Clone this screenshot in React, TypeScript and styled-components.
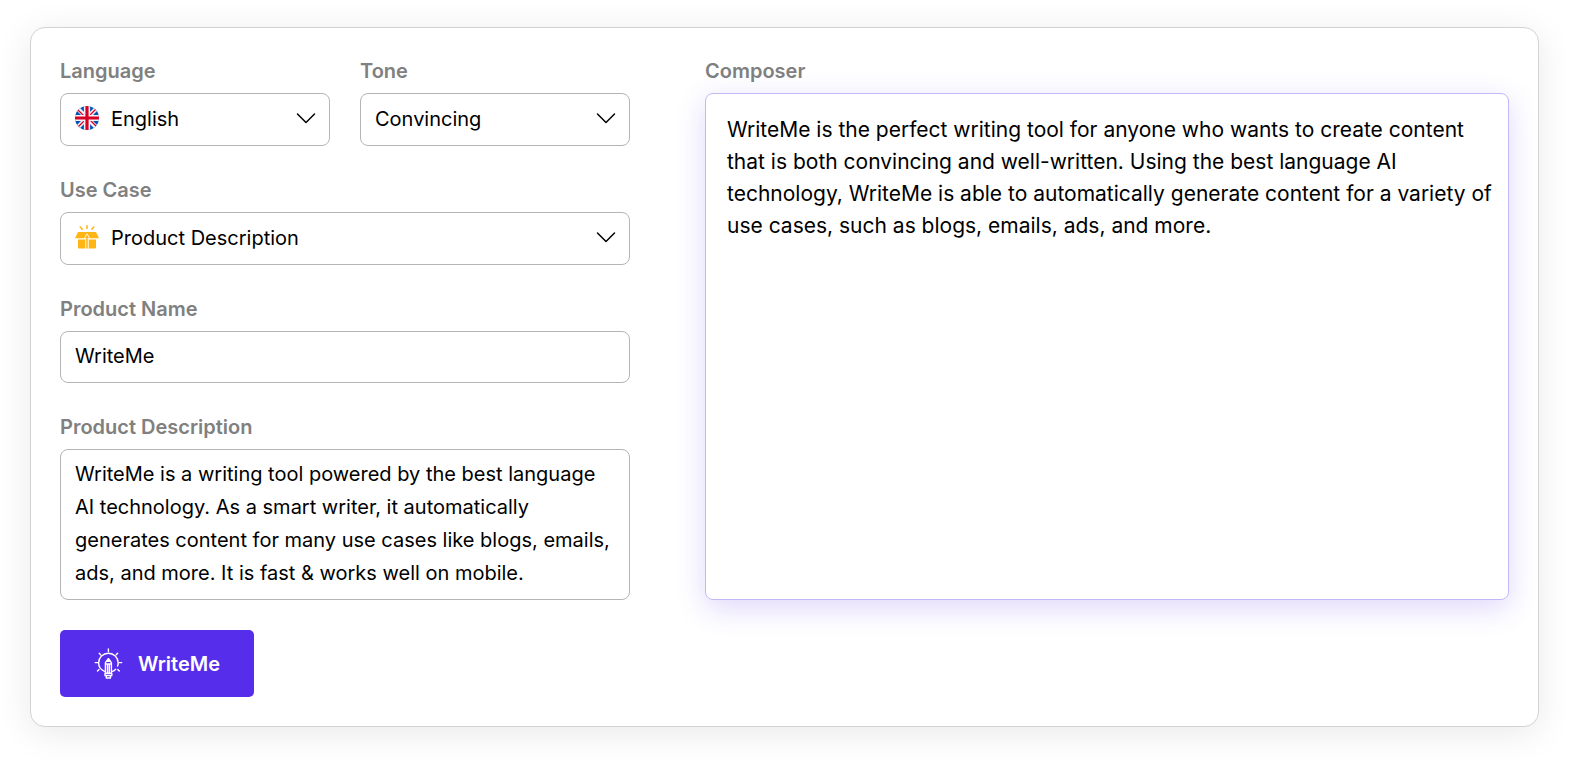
import React, { useState } from "react";
import styled, { createGlobalStyle } from "styled-components";

const GlobalStyle = createGlobalStyle`
  *, *::before, *::after { box-sizing: border-box; }
  body {
    margin: 0;
    background: #fff;
    color: #000;
    font-family: Inter, "Liberation Sans", sans-serif;
    font-size: 20px;
  }
`;

const Page = styled.main`
  padding: 27px 30px 34px;
`;

const Card = styled.form`
  display: grid;
  grid-template-columns: minmax(0, 570fr) minmax(0, 804fr);
  column-gap: 75px;
  row-gap: 30px;
  padding: 29px;
  border: 1px solid #d3d3d3;
  border-radius: 15px;
  background: #fff;
  box-shadow: 0 6px 36px rgba(0, 0, 0, 0.09);
`;

const Fields = styled.div`
  display: flex;
  flex-direction: column;
  gap: 30px;
`;

const Pair = styled.div`
  display: grid;
  grid-template-columns: 1fr 1fr;
  gap: 30px;
`;

const Field = styled.div`
  display: flex;
  flex-direction: column;
  gap: 8px;
  min-width: 0;
`;

const Label = styled.label`
  color: #808080;
  font-weight: 600;
  line-height: 28px;
`;

const Control = styled.div`
  position: relative;
  display: flex;
`;

const LeadingIcon = styled.span`
  position: absolute;
  left: 15px;
  top: 0;
  bottom: 3px;
  display: flex;
  align-items: center;
  pointer-events: none;
`;

const TrailingIcon = styled(LeadingIcon)`
  left: auto;
  right: 14px;
`;

const Select = styled.select<{ $icon?: boolean }>`
  appearance: none;
  width: 100%;
  height: 53px;
  padding: 0 44px 2px ${(p) => (p.$icon ? 50 : 14)}px;
  border: 1px solid #b5b5b5;
  border-radius: 8px;
  background: #fff;
  color: #000;
  font: inherit;
`;

const TextInput = styled.input`
  width: 100%;
  height: 52px;
  padding: 0 14px 2px;
  border: 1px solid #b5b5b5;
  border-radius: 8px;
  background: #fff;
  color: #000;
  font: inherit;
`;

const TextArea = styled.textarea`
  display: block;
  width: 100%;
  height: 151px;
  padding: 8px 14px;
  border: 1px solid #b5b5b5;
  border-radius: 8px;
  background: #fff;
  color: #000;
  font: inherit;
  line-height: 33px;
  resize: none;
  overflow: hidden;
`;

const Composer = styled(TextArea)`
  flex: 1;
  height: auto;
  padding: 20px 14px 20px 21px;
  border-color: #c3b8fa;
  font-size: 21px;
  line-height: 32px;
  box-shadow: 0 8px 30px rgba(86, 45, 235, 0.19);
`;

const SubmitButton = styled.button`
  display: inline-flex;
  align-items: center;
  justify-self: start;
  gap: 15px;
  height: 67px;
  padding: 0 34px;
  border: 0;
  border-radius: 5px;
  background: #562deb;
  color: #fff;
  font: inherit;
  font-weight: 600;
  cursor: pointer;
`;

const Chevron = () => (
  <svg width="20" height="12" viewBox="0 0 20 12" fill="none" stroke="#000" strokeWidth="1.5" strokeLinecap="round" strokeLinejoin="round" aria-hidden="true">
    <path d="M1.5 2 10 10.500l8.500-8.500" />
  </svg>
);

const UnionJack = () => (
  <svg width="24" height="24" viewBox="0 0 24 24" aria-hidden="true">
    <defs>
      <clipPath id="roundel"><circle cx="12" cy="12" r="12" /></clipPath>
    </defs>
    <g clipPath="url(#roundel)">
      <rect width="24" height="24" fill="#0052b4" />
      <path d="M0 0 24 24M24 0 0 24" stroke="#f5f3f6" strokeWidth="4.400" />
      <path d="M2.500 3.500 11 12M13 12l8.500 8.500M21.500 2.500 12 12M11 13l-8.500 8.500" stroke="#d80027" strokeWidth="1.300" />
      <path d="M12 0v24M0 12h24" stroke="#f5f3f6" strokeWidth="6.200" />
      <path d="M12 0v24M0 12h24" stroke="#d80027" strokeWidth="3.200" />
    </g>
  </svg>
);

const GiftBox = () => (
  <svg width="24" height="24" viewBox="0 0 24 24" fill="#ffb615" aria-hidden="true">
    <path d="M3 7h18l3 6.200h-9.200L12.600 8.800h-1.200L9.200 13.200H0z" />
    <path d="M12 9.200l2 4h-4z" />
    <path d="M3 14.400h7.300v9H4a1 1 0 0 1-1-1zM13.700 14.400H21v8a1 1 0 0 1-1 1h-6.300zM11.200 13.200h1.600v10.200h-1.600z" />
    <path d="M12 .9v2.600M5.200 2l2 2.200M18.800 2l-2 2.200" stroke="#ffb615" strokeWidth="1.600" strokeLinecap="round" />
  </svg>
);

const BulbPencil = () => (
  <svg width="29" height="32" viewBox="0 0 29 32" fill="none" stroke="#fff" strokeWidth="1.400" strokeLinecap="round" strokeLinejoin="round" aria-hidden="true">
    <path d="M10.500 23.300C7 21.800 4.600 18.800 4.600 15a9.800 9.800 0 0 1 19.600 0c0 1-.2 2-.6 3M21.700 21.200c-.9.900-2 1.700-3.200 2.100" />
    <path d="M14.400 1v2.500M5.200 5.300l1.400 1.500M23.600 5.300l-1.400 1.500M1.200 14.600h2.400M25.300 14.600h2.400M3.500 23l1.500-1.500M25.300 23l-1.500-1.500" />
    <path d="M11.400 25V14.700l3-4 3 4V25M11.400 16h6M13.500 16v9M15.300 16v9M11 25.200h6.800v2.300H11zM12.300 27.700v2.300h4.200v-2.300" />
    <path d="m12.700 13.400 1.700-2.500 1.700 2.500z" fill="#fff" />
  </svg>
);

interface SelectFieldProps {
  id: string;
  label: string;
  options: string[];
  icon?: React.ReactNode;
}

const SelectField = ({ id, label, options, icon }: SelectFieldProps) => (
  <Field>
    <Label htmlFor={id}>{label}</Label>
    <Control>
      <Select id={id} $icon={Boolean(icon)}>
        {options.map((option) => (
          <option key={option}>{option}</option>
        ))}
      </Select>
      {icon && <LeadingIcon>{icon}</LeadingIcon>}
      <TrailingIcon><Chevron /></TrailingIcon>
    </Control>
  </Field>
);

const DESCRIPTION =
  "WriteMe is a writing tool powered by the best language AI technology. As a smart writer, it automatically generates content for many use cases like blogs, emails, ads, and more. It is fast & works well on mobile.";

const RESULT =
  "WriteMe is the perfect writing tool for anyone who wants to create content that is both convincing and well-written. Using the best language AI technology, WriteMe is able to automatically generate content for a variety of use cases, such as blogs, emails, ads, and more.";

export default function App() {
  const [name, setName] = useState("WriteMe");
  const [description, setDescription] = useState(DESCRIPTION);
  const [result, setResult] = useState(RESULT);

  return (
    <>
      <GlobalStyle />
      <Page>
        <Card onSubmit={(e) => e.preventDefault()}>
          <Fields>
            <Pair>
              <SelectField id="language" label="Language" options={["English"]} icon={<UnionJack />} />
              <SelectField id="tone" label="Tone" options={["Convincing"]} />
            </Pair>
            <SelectField id="use-case" label="Use Case" options={["Product Description"]} icon={<GiftBox />} />
            <Field>
              <Label htmlFor="name">Product Name</Label>
              <TextInput id="name" value={name} onChange={(e) => setName(e.target.value)} />
            </Field>
            <Field>
              <Label htmlFor="description">Product Description</Label>
              <TextArea id="description" spellCheck={false} value={description} onChange={(e) => setDescription(e.target.value)} />
            </Field>
          </Fields>
          <Field>
            <Label htmlFor="composer">Composer</Label>
            <Composer id="composer" spellCheck={false} value={result} onChange={(e) => setResult(e.target.value)} />
          </Field>
          <SubmitButton type="submit">
            <BulbPencil />
            WriteMe
          </SubmitButton>
        </Card>
      </Page>
    </>
  );
}
